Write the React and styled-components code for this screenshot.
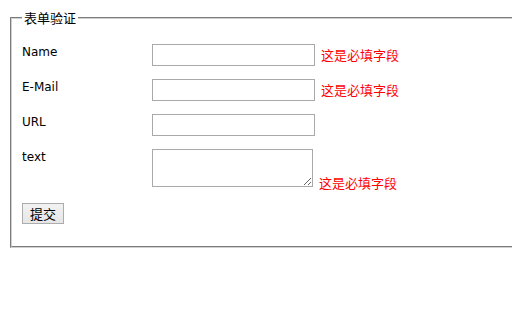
import React from 'react';
import styled, { createGlobalStyle } from 'styled-components';

const GlobalStyle = createGlobalStyle`
  html {
    overflow: hidden;
  }

  body {
    margin: 8px 0 8px 8px;
    background: #fff;
    font-family: "DejaVu Sans", Verdana, sans-serif;
  }
`;

const FieldSet = styled.fieldset`
  width: 520px;
  margin: 0 0 0 2px;
  padding: 16px 10px 22px;
  border: 2px groove #d0d0d0;
`;

const Legend = styled.legend`
  padding: 0 2px;
  font-family: "Noto Sans CJK SC", sans-serif;
  font-size: 13px;
  line-height: 20px;
  color: #000;
`;

const Grid = styled.div`
  display: grid;
  grid-template-columns: 130px 1fr;
  row-gap: 13px;
  align-items: start;
`;

const Label = styled.label`
  padding-top: 1px;
  font-size: 12px;
  line-height: 15px;
  color: #000;
`;

const Field = styled.div`
  display: flex;
  align-items: ${(p) => (p.$bottom ? 'flex-end' : 'center')};
  gap: 6px;
`;

const TextInput = styled.input`
  box-sizing: border-box;
  width: 163px;
  height: 22px;
  margin: 0;
  border: 1px solid #a9a9a9;
  background: #fff;
`;

const TextArea = styled.textarea`
  box-sizing: border-box;
  width: 161px;
  height: 38px;
  margin: 0;
  border: 1px solid #a9a9a9;
  background: #fff;
  resize: both;
`;

const ErrorText = styled.span`
  font-family: "Noto Sans CJK SC", sans-serif;
  font-size: 13px;
  line-height: 16px;
  color: #f00;
  margin-bottom: ${(p) => (p.$bottom ? '-4px' : '0')};
`;

const Submit = styled.button`
  grid-column: 1 / -1;
  justify-self: start;
  box-sizing: border-box;
  width: 42px;
  height: 21px;
  margin-top: 3px;
  padding: 0;
  border: 1px solid #acacac;
  border-radius: 0;
  background: linear-gradient(#f2f2f2, #e6e6e6);
  font-family: "Noto Sans CJK SC", sans-serif;
  font-size: 13px;
  line-height: 19px;
  color: #000;
`;

const rows = [
  { label: 'Name', required: true },
  { label: 'E-Mail', required: true },
  { label: 'URL', required: false },
];

const App = () => (
  <>
    <GlobalStyle />
    <form onSubmit={(e) => e.preventDefault()}>
      <FieldSet>
        <Legend>表单验证</Legend>
        <Grid>
          {rows.map((row) => (
            <React.Fragment key={row.label}>
              <Label>{row.label}</Label>
              <Field>
                <TextInput type="text" />
                {row.required && <ErrorText>这是必填字段</ErrorText>}
              </Field>
            </React.Fragment>
          ))}
          <Label>text</Label>
          <Field $bottom>
            <TextArea />
            <ErrorText $bottom>这是必填字段</ErrorText>
          </Field>
          <Submit type="submit">提交</Submit>
        </Grid>
      </FieldSet>
    </form>
  </>
);

export default App;
